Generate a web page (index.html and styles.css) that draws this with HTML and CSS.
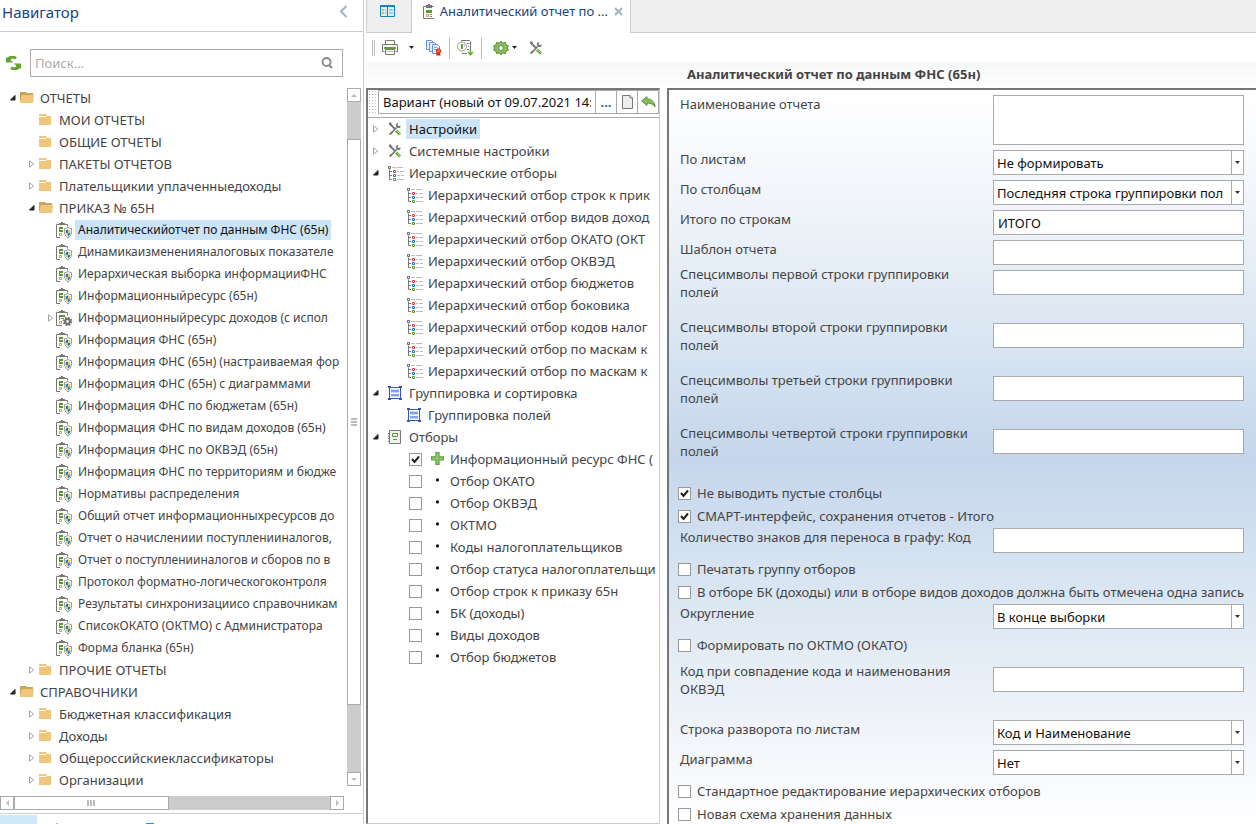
FILE: index.html
```html
<!DOCTYPE html>
<html lang="ru">
  <head>
    <meta charset="UTF-8" />
    <meta name="viewport" content="width=device-width, initial-scale=1.0" />
    <title>Аналитический отчет по данным ФНС (65н)</title>
    <link rel="stylesheet" href="styles.css" />
  </head>
  <body>
    <!-- Icon set -->
    <svg class="sprite" aria-hidden="true">
      <symbol id="open" viewBox="0 0 6 6"><path d="M5 .5V5H.5z" fill="#222" stroke="#222" /></symbol>
      <symbol id="closed" viewBox="0 0 6 8"><path d="M.5.8v6.4L4.7 4z" fill="#fff" stroke="#999" stroke-width=".9" /></symbol>
      <symbol id="folder" viewBox="0 0 17 14"><path d="M0 1h7l1 2h4v9H0z" fill="#efc77b" /><path d="M0 3.500h7" stroke="#fff" /></symbol>
      <symbol id="folder-open" viewBox="0 0 17 14"><path d="M0 12V1h6l1 1h6v3H2z" fill="#c9a55c" /><path d="M2 4h12l-1 8H0z" fill="#efc77b" /></symbol>
      <symbol id="report" viewBox="0 0 17 17">
        <path d="M3 2.500H.500v13H4M9 2.500h2.500v2" fill="none" stroke="#777" />
        <path d="M3 1h2V0h2v1h2v2H3z" fill="#777" />
        <path d="M3 5h4v2H4v1h3v2H3z" fill="#5b962e" />
        <path d="M3.500 11.500h2v2h-2z" fill="none" stroke="#d99b45" />
        <path d="M12 5.500c1.500 1 2.500 1 3.500 1 .5 5-.500 7.500-3.500 9.500-3-2-4-4.500-3.500-9.500 1 0 2 0 3.500-1z" fill="#fff" stroke="#999" />
        <path d="M12 7.500V11H9.700V8zM12 11h2.400c-.3 1.500-1 2.800-2.400 3.600z" fill="#1681c4" />
        <path d="M12 7.500V11h2.400V8zM12 11H9.600c.3 1.500 1 2.800 2.400 3.600z" fill="#f0c768" />
      </symbol>
      <symbol id="report-gear" viewBox="0 0 17 17">
        <path d="M3 2.500H.500v13H6M9 2.500h2.500v3" fill="none" stroke="#777" />
        <path d="M3 1h2V0h2v1h2v2H3z" fill="#777" />
        <path d="M3 5h6v2H4v3H3zM5 8h3v1H5z" fill="#5b962e" />
        <path d="M3.500 11.500h2v2h-2z" fill="none" stroke="#d99b45" />
        <circle cx="11.500" cy="11.500" r="3.800" fill="none" stroke="#707070" stroke-width="2" stroke-dasharray="1.600 1.380" />
        <circle cx="11.500" cy="11.500" r="2.400" fill="#fff" stroke="#707070" stroke-width="2" />
      </symbol>
      <symbol id="tools" viewBox="0 0 14 14">
        <path d="M1.500 1.500l5 5M2.500 12l6-6.500" stroke="#777" stroke-width="1.800" />
        <path d="M1 .5h2l1 2-1 1-2-1zM12.500 3.500l-2 .5-1-1 .8-2C8 1 7.500 3 8 4.500L9.500 6c2 .4 3.500-.5 3-2.500z" fill="#777" />
        <path d="M1 12.200l1 1L4.500 11 3 9.500z" fill="#777" />
        <path d="M8 8.500l4 4" stroke="#65a532" stroke-width="3" /><path d="M8 8l4 4" stroke="#b6d99c" />
      </symbol>
      <symbol id="hier" viewBox="0 0 16 15">
        <path d="M1.500 3.500v10H4M1.500 5.500H4M1.500 9.500H4" fill="none" stroke="#777" />
        <path d="M.5.500h2v2h-2z" fill="none" stroke="#666" />
        <path d="M5.500 4.500h2v2h-2z" fill="none" stroke="#d93d4d" />
        <path d="M5.500 8.500h2v2h-2z" fill="none" stroke="#1681c4" />
        <path d="M5.500 12.500h2v2h-2z" fill="none" stroke="#5b9b30" />
        <path d="M4 1.500h4M9 1.500h6M9 5.500h2M12 5.500h4M9 9.500h3M13 9.500h3M9 13.500h7" stroke="#bbb" />
      </symbol>
      <symbol id="group" viewBox="0 0 14 14">
        <path d="M1.500 0v14M12.500 0v14M0 1.500h14M0 12.500h14" stroke="#3156b4" />
        <path d="M0 0h3v2H0zM11 0h3v2h-3zM0 12h3v2H0zM11 12h3v2h-3z" fill="#3156b4" />
        <path d="M3 3.500h8M3 6.500h8M3 10.500h8" stroke="#c8d8ff" /><path d="M3 5h8M3 9h8" stroke="#7ea3f4" stroke-width="2" />
      </symbol>
      <symbol id="book" viewBox="0 0 14 14">
        <path d="M1.500.5h11v13h-11z" fill="#f1f1f1" stroke="#777" />
        <path d="M0 3.500h2M0 6.500h2M0 8.500h2M0 11.500h2" stroke="#777" />
        <path d="M4.500 3.500h5v3h-5zM5 9.500h4" fill="none" stroke="#5b9b30" />
      </symbol>
      <symbol id="plus" viewBox="0 0 13 13"><path d="M4.500.5h3v4h4v3h-4v4h-3v-4h-4v-3h4z" fill="#91c574" stroke="#5fa336" /></symbol>
      <symbol id="dot" viewBox="0 0 13 13"><circle cx="6" cy="5.500" r="1.500" fill="#111" /></symbol>
    </svg>

    <div class="app">
      <nav class="navigator">
        <header class="nav-header">
          <h2>Навигатор</h2>
          <button class="plain" aria-label="Свернуть"><svg width="9" height="13"><path d="M7.500 1L2 6.500 7.500 12" fill="none" stroke="#9db5cc" stroke-width="2" /></svg></button>
        </header>
        <div class="nav-search">
          <button class="plain" aria-label="Обновить">
            <svg width="15" height="14"><path d="M0 1l1 1c3-3 7-3 10-.5l-2 2C7 2 5.500 2.500 4.500 4L7 6.500H0zM15 13l-1-1c-3 3-7 3-10 .5l2-2c2 1.500 3.500 1 4.500-.5L8 7.500h7z" fill="#62a22d" /></svg>
          </button>
          <div class="search-box">
            <input type="text" placeholder="Поиск..." aria-label="Поиск" />
            <button class="plain" aria-label="Найти"><svg width="12" height="12"><circle cx="5.500" cy="5" r="4" fill="none" stroke="#888" stroke-width="1.800" /><path d="M8 8l3 3" stroke="#888" stroke-width="2" /></svg></button>
          </div>
        </div>
        <div class="nav-body">
          <ul class="tree nav-tree">
            <li class="l0"><svg class="arrow"><use href="#open" /></svg><svg class="icon folder"><use href="#folder-open" /></svg><a href="#">ОТЧЕТЫ</a></li>
            <li class="l1"><span class="arrow"></span><svg class="icon folder"><use href="#folder" /></svg><a href="#">МОИ ОТЧЕТЫ</a></li>
            <li class="l1"><span class="arrow"></span><svg class="icon folder"><use href="#folder" /></svg><a href="#">ОБЩИЕ ОТЧЕТЫ</a></li>
            <li class="l1"><svg class="arrow"><use href="#closed" /></svg><svg class="icon folder"><use href="#folder" /></svg><a href="#">ПАКЕТЫ ОТЧЕТОВ</a></li>
            <li class="l1"><svg class="arrow"><use href="#closed" /></svg><svg class="icon folder"><use href="#folder" /></svg><a href="#">Плательщикии уплаченныедоходы</a></li>
            <li class="l1"><svg class="arrow"><use href="#open" /></svg><svg class="icon folder"><use href="#folder-open" /></svg><a href="#">ПРИКАЗ № 65Н</a></li>
            <li class="l2"><span class="arrow"></span><svg class="icon report"><use href="#report" /></svg><a href="#" class="selected">Аналитическийотчет по данным ФНС (65н)</a></li>
            <li class="l2"><span class="arrow"></span><svg class="icon report"><use href="#report" /></svg><a href="#">Динамикаизмененияналоговых показателе</a></li>
            <li class="l2"><span class="arrow"></span><svg class="icon report"><use href="#report" /></svg><a href="#">Иерархическая выборка информацииФНС</a></li>
            <li class="l2"><span class="arrow"></span><svg class="icon report"><use href="#report" /></svg><a href="#">Информационныйресурс (65н)</a></li>
            <li class="l2"><svg class="arrow"><use href="#closed" /></svg><svg class="icon report"><use href="#report-gear" /></svg><a href="#">Информационныйресурс доходов (с испол</a></li>
            <li class="l2"><span class="arrow"></span><svg class="icon report"><use href="#report" /></svg><a href="#">Информация ФНС (65н)</a></li>
            <li class="l2"><span class="arrow"></span><svg class="icon report"><use href="#report" /></svg><a href="#">Информация ФНС (65н) (настраиваемая фор</a></li>
            <li class="l2"><span class="arrow"></span><svg class="icon report"><use href="#report" /></svg><a href="#">Информация ФНС (65н) с диаграммами</a></li>
            <li class="l2"><span class="arrow"></span><svg class="icon report"><use href="#report" /></svg><a href="#">Информация ФНС по бюджетам (65н)</a></li>
            <li class="l2"><span class="arrow"></span><svg class="icon report"><use href="#report" /></svg><a href="#">Информация ФНС по видам доходов (65н)</a></li>
            <li class="l2"><span class="arrow"></span><svg class="icon report"><use href="#report" /></svg><a href="#">Информация ФНС по ОКВЭД (65н)</a></li>
            <li class="l2"><span class="arrow"></span><svg class="icon report"><use href="#report" /></svg><a href="#">Информация ФНС по территориям и бюдже</a></li>
            <li class="l2"><span class="arrow"></span><svg class="icon report"><use href="#report" /></svg><a href="#">Нормативы распределения</a></li>
            <li class="l2"><span class="arrow"></span><svg class="icon report"><use href="#report" /></svg><a href="#">Общий отчет информационныхресурсов до</a></li>
            <li class="l2"><span class="arrow"></span><svg class="icon report"><use href="#report" /></svg><a href="#">Отчет о начислениии поступленииналогов,</a></li>
            <li class="l2"><span class="arrow"></span><svg class="icon report"><use href="#report" /></svg><a href="#">Отчет о поступленииналогов и сборов по в</a></li>
            <li class="l2"><span class="arrow"></span><svg class="icon report"><use href="#report" /></svg><a href="#">Протокол форматно-логическогоконтроля</a></li>
            <li class="l2"><span class="arrow"></span><svg class="icon report"><use href="#report" /></svg><a href="#">Результаты синхронизациисо справочникам</a></li>
            <li class="l2"><span class="arrow"></span><svg class="icon report"><use href="#report" /></svg><a href="#">СписокОКАТО (ОКТМО) с Администратора</a></li>
            <li class="l2"><span class="arrow"></span><svg class="icon report"><use href="#report" /></svg><a href="#">Форма бланка (65н)</a></li>
            <li class="l1"><svg class="arrow"><use href="#closed" /></svg><svg class="icon folder"><use href="#folder" /></svg><a href="#">ПРОЧИЕ ОТЧЕТЫ</a></li>
            <li class="l0"><svg class="arrow"><use href="#open" /></svg><svg class="icon folder"><use href="#folder-open" /></svg><a href="#">СПРАВОЧНИКИ</a></li>
            <li class="l1"><svg class="arrow"><use href="#closed" /></svg><svg class="icon folder"><use href="#folder" /></svg><a href="#">Бюджетная классификация</a></li>
            <li class="l1"><svg class="arrow"><use href="#closed" /></svg><svg class="icon folder"><use href="#folder" /></svg><a href="#">Доходы</a></li>
            <li class="l1"><svg class="arrow"><use href="#closed" /></svg><svg class="icon folder"><use href="#folder" /></svg><a href="#">Общероссийскиеклассификаторы</a></li>
            <li class="l1"><svg class="arrow"><use href="#closed" /></svg><svg class="icon folder"><use href="#folder" /></svg><a href="#">Организации</a></li>
          </ul>
          <div class="vscroll">
            <button aria-label="Вверх"><svg width="6" height="3"><path d="M0 3l3-3 3 3z" fill="#bbb" /></svg></button>
            <div class="track-start"></div>
            <div class="thumb"><i></i><i></i><i></i></div>
            <div class="track-end"></div>
            <button aria-label="Вниз"><svg width="6" height="3"><path d="M0 0l3 3 3-3z" fill="#bbb" /></svg></button>
          </div>
        </div>
        <div class="hscroll">
          <button aria-label="Влево"><svg width="3" height="6"><path d="M3 0L0 3l3 3z" fill="#bbb" /></svg></button>
          <div class="thumb"><i></i><i></i><i></i></div>
          <div class="track-end"></div>
          <button aria-label="Вправо"><svg width="3" height="6"><path d="M0 0l3 3-3 3z" fill="#bbb" /></svg></button>
        </div>
        <footer class="nav-footer"><span></span><svg width="160" height="9"><path d="M20 8v1M109 8.500h8" stroke="#2f8fcb" /></svg></footer>
      </nav>

      <main class="workspace">
        <div class="tabs">
          <button class="tab home" aria-label="Главная">
            <svg width="15" height="13"><path d="M.5.500h14v11H.500z" fill="#d9f0fb" stroke="#1681c4" /><path d="M0 1h15" stroke="#1681c4" stroke-width="2" /><path d="M7.500 1v10" stroke="#1681c4" /><path d="M2 5h2M2 8h2" stroke="#e2a33c" stroke-width="1.500" /><path d="M5 5h1M5 8h1" stroke="#5b9b30" /><path d="M9 5h4M9 8h4" stroke="#8cc4e6" stroke-width="1.500" /></svg>
          </button>
          <div class="tab active">
            <svg width="12" height="15"><path d="M.5 2.500h11v12H.500z" fill="#fff" stroke="#777" /><path d="M3 1h2V0h2v1h2v3H3z" fill="#777" /><path d="M3 6h6v3H3z" fill="#5b962e" /><path d="M3.500 10.500h2v2h-2z" fill="none" stroke="#d99b45" /><path d="M7 10.500h2M7 12.500h2" stroke="#888" /></svg>
            <span>Аналитический отчет по ...</span>
            <button class="plain" aria-label="Закрыть"><svg width="9" height="9"><path d="M1 1l7 7M8 1L1 8" stroke="#a3b5ca" stroke-width="2.200" /></svg></button>
          </div>
        </div>

        <div class="toolbar">
          <span class="grip"></span>
          <button class="plain print" aria-label="Печать">
            <svg width="16" height="15"><path d="M3.500 5V.600h9V5" fill="#fff" stroke="#777" /><path d="M2.500 11.500h-2v-7h15v7h-2" fill="#fff" stroke="#777" /><path d="M2 8h12" stroke="#62a22d" stroke-width="2" /><path d="M3.500 9.500h9v5h-9z" fill="#fff" stroke="#777" /><path d="M5 11.500h6" stroke="#bbb" /></svg>
          </button>
          <button class="plain caret" aria-label="Варианты печати"><svg width="5" height="3"><path d="M0 0h5L2.500 3z" fill="#222" /></svg></button>
          <button class="plain copies" aria-label="Копии">
            <svg width="16" height="16"><g fill="#e5edff" stroke="#6b92dc"><path d="M.5.500h5l2 2v7h-7z" /><path d="M3.500 2.500h5l2 2v7h-7z" /><path d="M6.500 4.500h5l2 2v7h-7z" /></g><path d="M8 7.500h3M8 9.500h3" stroke="#7ea3f4" /><path d="M11 12l-1 3.500h4.500L14 12z" fill="#c72d1d" /><circle cx="12.500" cy="11" r="2.200" fill="#f36b29" stroke="#c72d1d" /></svg>
          </button>
          <button class="plain bordered" aria-label="Выгрузить">
            <svg width="16" height="16"><path d="M4 .5h8.500l1 1v8M4.500 13.500H10" fill="none" stroke="#777" /><circle cx="5" cy="6.500" r="4.500" fill="#fff" stroke="#999" /><path d="M4 4h2v5H4z" fill="#62a22d" /><path d="M7.500 4v3" stroke="#ccc" /><path d="M10 3.500h2M11 6.500h1M10 9.500h2" stroke="#777" /><path d="M13.500 9v5M11 12l2.500 2.700L16 12" fill="none" stroke="#62a22d" stroke-width="1.400" /></svg>
          </button>
          <button class="plain gear" aria-label="Настройка">
            <svg width="16" height="16"><path d="M8 1l1.500 2.200 3-.8.4 2.400L15.500 6 14 8l1.500 2-2.600 1.200-.4 2.400-3-.8L8 15l-1.500-2.200-3 .8-.4-2.400L.500 10 2 8 .5 6l2.600-1.200.4-2.400 3 .8z" fill="#8abd62" stroke="#558f2b" /><circle cx="8" cy="8" r="2.500" fill="#fff" stroke="#558f2b" /></svg>
            <svg width="5" height="3"><path d="M0 0h5L2.500 3z" fill="#222" /></svg>
          </button>
          <button class="plain" aria-label="Сервис"><svg width="14" height="14"><use href="#tools" /></svg></button>
        </div>

        <h1 class="report-title">Аналитический отчет по данным ФНС (65н)</h1>

        <div class="panels">
          <section class="settings">
            <div class="variant">
              <span class="dots"></span>
              <input type="text" value="Вариант (новый от 09.07.2021 14:" aria-label="Вариант" />
              <button class="more" aria-label="Выбрать">...</button>
              <button aria-label="Новый"><svg width="11" height="14"><path d="M.5.500H8L10.500 3v10.500H.500z" fill="#eee" stroke="#777" /><path d="M8 .5V3h2.500" fill="#fff" stroke="#777" /></svg></button>
              <button aria-label="Назад"><svg width="15" height="12"><path d="M.7 5L6 .7V3c5 0 7.500 3 8 8C12 8 10 7 6 7v2.500z" fill="#8abd62" stroke="#558f2b" /></svg></button>
            </div>
            <ul class="tree set-tree">
              <li class="s0"><svg class="arrow"><use href="#closed" /></svg><svg class="icon"><use href="#tools" /></svg><a href="#" class="selected">Настройки</a></li>
              <li class="s0"><svg class="arrow"><use href="#closed" /></svg><svg class="icon"><use href="#tools" /></svg><a href="#">Системные настройки</a></li>
              <li class="s0"><svg class="arrow"><use href="#open" /></svg><svg class="icon wide"><use href="#hier" /></svg><a href="#">Иерархические отборы</a></li>
              <li class="s1"><svg class="icon wide"><use href="#hier" /></svg><a href="#">Иерархический отбор строк к прик</a></li>
              <li class="s1"><svg class="icon wide"><use href="#hier" /></svg><a href="#">Иерархический отбор видов доход</a></li>
              <li class="s1"><svg class="icon wide"><use href="#hier" /></svg><a href="#">Иерархический отбор ОКАТО (ОКТ</a></li>
              <li class="s1"><svg class="icon wide"><use href="#hier" /></svg><a href="#">Иерархический отбор ОКВЭД</a></li>
              <li class="s1"><svg class="icon wide"><use href="#hier" /></svg><a href="#">Иерархический отбор бюджетов</a></li>
              <li class="s1"><svg class="icon wide"><use href="#hier" /></svg><a href="#">Иерархический отбор боковика</a></li>
              <li class="s1"><svg class="icon wide"><use href="#hier" /></svg><a href="#">Иерархический отбор кодов налог</a></li>
              <li class="s1"><svg class="icon wide"><use href="#hier" /></svg><a href="#">Иерархический отбор по маскам к</a></li>
              <li class="s1"><svg class="icon wide"><use href="#hier" /></svg><a href="#">Иерархический отбор по маскам к</a></li>
              <li class="s0"><svg class="arrow"><use href="#open" /></svg><svg class="icon"><use href="#group" /></svg><a href="#">Группировка и сортировка</a></li>
              <li class="s1"><svg class="icon"><use href="#group" /></svg><a href="#">Группировка полей</a></li>
              <li class="s0"><svg class="arrow"><use href="#open" /></svg><svg class="icon"><use href="#book" /></svg><a href="#">Отборы</a></li>
              <li class="s2"><label><input type="checkbox" checked /><svg class="icon"><use href="#plus" /></svg>Информационный ресурс ФНС (</label></li>
              <li class="s2"><label><input type="checkbox" /><svg class="icon"><use href="#dot" /></svg>Отбор ОКАТО</label></li>
              <li class="s2"><label><input type="checkbox" /><svg class="icon"><use href="#dot" /></svg>Отбор ОКВЭД</label></li>
              <li class="s2"><label><input type="checkbox" /><svg class="icon"><use href="#dot" /></svg>ОКТМО</label></li>
              <li class="s2"><label><input type="checkbox" /><svg class="icon"><use href="#dot" /></svg>Коды налогоплательщиков</label></li>
              <li class="s2"><label><input type="checkbox" /><svg class="icon"><use href="#dot" /></svg>Отбор статуса налогоплательщи</label></li>
              <li class="s2"><label><input type="checkbox" /><svg class="icon"><use href="#dot" /></svg>Отбор строк к приказу 65н</label></li>
              <li class="s2"><label><input type="checkbox" /><svg class="icon"><use href="#dot" /></svg>БК (доходы)</label></li>
              <li class="s2"><label><input type="checkbox" /><svg class="icon"><use href="#dot" /></svg>Виды доходов</label></li>
              <li class="s2"><label><input type="checkbox" /><svg class="icon"><use href="#dot" /></svg>Отбор бюджетов</label></li>
            </ul>
          </section>

          <form class="params">
            <div class="field"><label for="name">Наименование отчета</label><textarea id="name"></textarea></div>
            <div class="field"><label for="sheets">По листам</label><select id="sheets"><option>Не формировать</option></select></div>
            <div class="field"><label for="columns">По столбцам</label><select id="columns"><option>Последняя строка группировки пол</option></select></div>
            <div class="field"><label for="total">Итого по строкам</label><input type="text" id="total" value="ИТОГО" /></div>
            <div class="field"><label for="template">Шаблон отчета</label><input type="text" id="template" /></div>
            <div class="field tall"><label for="spec1">Спецсимволы первой строки группировки полей</label><input type="text" id="spec1" /></div>
            <div class="field tall"><label for="spec2">Спецсимволы второй строки группировки полей</label><input type="text" id="spec2" /></div>
            <div class="field tall"><label for="spec3">Спецсимволы третьей строки группировки полей</label><input type="text" id="spec3" /></div>
            <div class="field tall"><label for="spec4">Спецсимволы четвертой строки группировки полей</label><input type="text" id="spec4" /></div>
            <label class="check"><input type="checkbox" checked />Не выводить пустые столбцы</label>
            <label class="check"><input type="checkbox" checked />СМАРТ-интерфейс, сохранения отчетов - Итого</label>
            <div class="field"><label for="digits">Количество знаков для переноса в графу: Код</label><input type="text" id="digits" /></div>
            <label class="check"><input type="checkbox" />Печатать группу отборов</label>
            <label class="check"><input type="checkbox" />В отборе БК (доходы) или в отборе видов доходов должна быть отмечена одна запись</label>
            <div class="field"><label for="round">Округление</label><select id="round"><option>В конце выборки</option></select></div>
            <label class="check last"><input type="checkbox" />Формировать по ОКТМО (ОКАТО)</label>
            <div class="field tall"><label for="okved">Код при совпадение кода и наименования ОКВЭД</label><input type="text" id="okved" /></div>
            <div class="field"><label for="turn">Строка разворота по листам</label><select id="turn"><option>Код и Наименование</option></select></div>
            <div class="field"><label for="chart">Диаграмма</label><select id="chart"><option>Нет</option></select></div>
            <label class="check"><input type="checkbox" />Стандартное редактирование иерархических отборов</label>
            <label class="check"><input type="checkbox" />Новая схема хранения данных</label>
          </form>
        </div>
      </main>
    </div>
  </body>
</html>
```
FILE: styles.css
```css
* {
  box-sizing: border-box;
}

body {
  margin: 0;
  font-family: "Noto Sans", "Open Sans", sans-serif;
  font-size: 13px;
  color: #444;
  background-color: #fff;
}

input,
select,
textarea,
button {
  font: inherit;
}

button,
.icon,
.arrow {
  flex-shrink: 0;
}

.sprite {
  display: none;
}

.plain {
  display: flex;
  align-items: center;
  padding: 0;
  border: none;
  background: none;
}

.app {
  display: flex;
  height: 100vh;
  overflow: hidden;
}

/* Navigator */
.navigator {
  display: flex;
  flex-direction: column;
  flex: 0 0 364px;
  min-width: 0;
  border-right: 1px solid #ccc;
}

.nav-header {
  display: flex;
  flex-shrink: 0;
  justify-content: space-between;
  height: 32px;
  padding: 0 15px 8px 2px;
  border-bottom: 1px solid #ccc;
}

.nav-header h2 {
  margin: 0;
  font-size: 15px;
  font-weight: normal;
  line-height: 24px;
  color: #17447e;
}

.nav-search {
  display: flex;
  gap: 9px;
  padding: 17px 20px 10px 6px;
}

.search-box {
  display: flex;
  flex: 1;
  height: 28px;
  padding-right: 9px;
  border: 1px solid #aaa;
}

.search-box input {
  flex: 1;
  min-width: 0;
  padding: 0 4px;
  border: none;
}

.search-box input::placeholder {
  color: #aaa;
}

.nav-body {
  display: flex;
  flex: 1;
  gap: 4px;
  min-height: 0;
  padding-right: 2px;
}

/* Trees */
.tree {
  margin: 0;
  padding: 0;
  list-style: none;
  overflow: hidden;
}

.tree li {
  display: flex;
  align-items: center;
  height: 22px;
  white-space: nowrap;
}

.tree a {
  padding: 0 3px;
  line-height: 20px;
  color: #444;
  text-decoration: none;
}

.tree .selected {
  background-color: #cce4f7;
  color: #111;
}

.arrow {
  width: 6px;
  height: 8px;
}

.nav-tree {
  flex: 1;
  min-width: 0;
}

.nav-tree .icon {
  height: 17px;
}

.nav-tree .folder {
  width: 17px;
  height: 14px;
  margin-left: 4px;
}

.nav-tree .report {
  width: 17px;
  margin: 0 2px;
}

.l0 {
  padding-left: 10px;
}

.l1 {
  padding-left: 29px;
}

.l2 {
  padding-left: 48px;
  font-size: 12px;
}

/* Scrollbars */
.vscroll,
.hscroll {
  display: flex;
  flex-shrink: 0;
  background-color: #ccc;
}

.vscroll {
  flex-direction: column;
  width: 14px;
  margin: 1px 0 10px;
}

.hscroll {
  height: 14px;
  margin-right: 19px;
}

.vscroll button,
.hscroll button {
  display: flex;
  align-items: center;
  justify-content: center;
  width: 14px;
  height: 14px;
  padding: 0;
  border: 1px solid #aaa;
  background-color: #fff;
}

.thumb {
  display: flex;
  align-items: center;
  justify-content: center;
  gap: 1px;
  border: 1px solid #aaa;
  background-color: #fff;
}

.thumb i {
  background-color: #bbb;
}

.vscroll .thumb {
  flex: 566;
  flex-direction: column;
}

.vscroll .thumb i {
  width: 6px;
  height: 2px;
}

.vscroll .track-start {
  flex: 37;
}

.vscroll .track-end {
  flex: 67;
}

.hscroll .thumb {
  flex: 154;
}

.hscroll .thumb i {
  width: 2px;
  height: 6px;
}

.hscroll .track-end {
  flex: 163;
}

.nav-footer {
  display: flex;
  flex-shrink: 0;
  height: 11px;
  margin-top: 3px;
  padding-top: 1px;
  border-top: 1px solid #ccc;
}

.nav-footer span {
  width: 37px;
  background-color: #cfe8fa;
}

/* Workspace */
.workspace {
  display: flex;
  flex: 1;
  flex-direction: column;
  min-width: 0;
  margin-left: 2px;
}

.tabs {
  display: flex;
  flex-shrink: 0;
  height: 33px;
  background: linear-gradient(#ccc, #ccc) bottom / 100% 1px no-repeat #efefef;
}

.tab {
  display: flex;
  align-items: center;
  padding: 0 6px 11px 13px;
  color: #17447e;
}

.home {
  width: 46px;
  border: none;
  border-right: 1px solid #ccc;
  border-left: 1px solid #ccc;
  background: none;
}

.active {
  gap: 6px;
  width: 219px;
  padding: 0 7px 11px 11px;
  border-right: 1px solid #ccc;
  background-color: #fff;
}

.active span {
  flex: 1;
  white-space: nowrap;
}

.toolbar {
  display: flex;
  flex-shrink: 0;
  align-items: center;
  height: 29px;
  padding-left: 6px;
}

.grip {
  width: 3px;
  height: 16px;
  margin-right: 7px;
  border: solid #bbb;
  border-width: 0 1px;
}

.caret {
  margin: 0 12px 0 11px;
}

.bordered {
  height: 22px;
  margin: 0 11px 0 7px;
  padding: 0 8px 0 7px;
  border: solid #bbb;
  border-width: 0 1px;
}

.gear {
  gap: 3px;
  margin-right: 12px;
}

.report-title {
  flex-shrink: 0;
  height: 26px;
  margin: 0;
  padding-left: 321px;
  font-size: 13px;
  line-height: 25px;
  background: linear-gradient(#f6f7f8, #fff);
}

.panels {
  display: flex;
  flex: 1;
  gap: 7px;
  min-height: 0;
}

/* Report settings */
.settings {
  flex: 0 0 294px;
  min-width: 0;
  border: 1px solid #ccc;
  border-top: 2px solid #777;
  border-left: 2px solid #777;
  overflow: hidden;
}

.variant {
  display: flex;
  height: 28px;
  padding-bottom: 3px;
  border-bottom: 1px solid #aaa;
}

.dots {
  width: 10px;
  background: radial-gradient(#b3bdc7 1px, transparent 1px) 0 0 / 3px 3px;
}

.variant input {
  flex: 1;
  min-width: 0;
  padding: 0 4px;
  border: 1px solid #aaa;
  color: #111;
}

.variant button {
  display: flex;
  align-items: center;
  justify-content: center;
  width: 21px;
  padding: 0;
  border: 1px solid #aaa;
  border-left: none;
  background-color: #fff;
}

.variant .more {
  font-weight: bold;
  color: #31639c;
}

.set-tree .icon {
  width: 14px;
  height: 14px;
  margin-right: 4px;
}

.set-tree .wide {
  width: 16px;
  height: 15px;
  margin-right: 2px;
}

.s0 .arrow {
  margin-right: 9px;
}

.s0 {
  padding-left: 5px;
}

.s1 {
  padding-left: 39px;
}

.s2 {
  padding-left: 41px;
}

.s2 label {
  display: flex;
  align-items: center;
}

.s2 input {
  width: 12px;
  height: 12px;
  margin-right: 9px;
}

.s2 .icon {
  margin-right: 5px;
}

input[type="checkbox"] {
  appearance: none;
  flex-shrink: 0;
  width: 13px;
  height: 13px;
  margin-top: 0;
  margin-bottom: 0;
  margin-left: 0;
  border: 1px solid #999;
  background-color: #fff;
}

input[type="checkbox"]:checked {
  background-image: url("data:image/svg+xml,%3Csvg xmlns='http://www.w3.org/2000/svg' viewBox='0 0 11 11'%3E%3Cpath d='M2 5l2.500 3L9 2.500' fill='none' stroke='%23222' stroke-width='2'/%3E%3C/svg%3E");
}

/* Parameters form */
.params {
  flex: 1;
  min-width: 0;
  padding-left: 9px;
  border-top: 2px solid #777;
  border-left: 2px solid #777;
  background: linear-gradient(#fff, #f0f4fa 16%, #dde8f3 31%, #c5d6ec 50%, #dde8f3 71%, #f0f4fa 87%, #fff);
  overflow: hidden;
}

.field {
  display: grid;
  grid-template-columns: 1fr 251px;
  gap: 18px;
  align-items: start;
  padding: 5px 12px 0 2px;
  line-height: 18px;
}

.field input,
.field select,
.field textarea {
  width: 100%;
  height: 25px;
  padding: 0 4px;
  border: 1px solid #aaa;
  border-radius: 0;
  background-color: #fff;
  color: #111;
}

.field textarea {
  display: block;
  height: 50px;
  resize: none;
}

.field select {
  appearance: none;
  padding: 0 16px 0 3px;
  background: url("data:image/svg+xml,%3Csvg xmlns='http://www.w3.org/2000/svg' width='12' height='23'%3E%3Cpath d='M.5 0v23' stroke='%23aaa'/%3E%3Cpath d='M4 10h5l-2.500 3z' fill='%23333'/%3E%3C/svg%3E") right / 12px 23px no-repeat #fff;
}

.tall {
  min-height: 53px;
  padding-top: 0;
}

.tall input {
  margin-top: 5px;
}

.check {
  display: flex;
  align-items: center;
  height: 23px;
  padding-top: 10px;
  line-height: 13px;
  white-space: nowrap;
}

.check input {
  margin-right: 6px;
}

.last {
  margin-bottom: 10px;
}
```
